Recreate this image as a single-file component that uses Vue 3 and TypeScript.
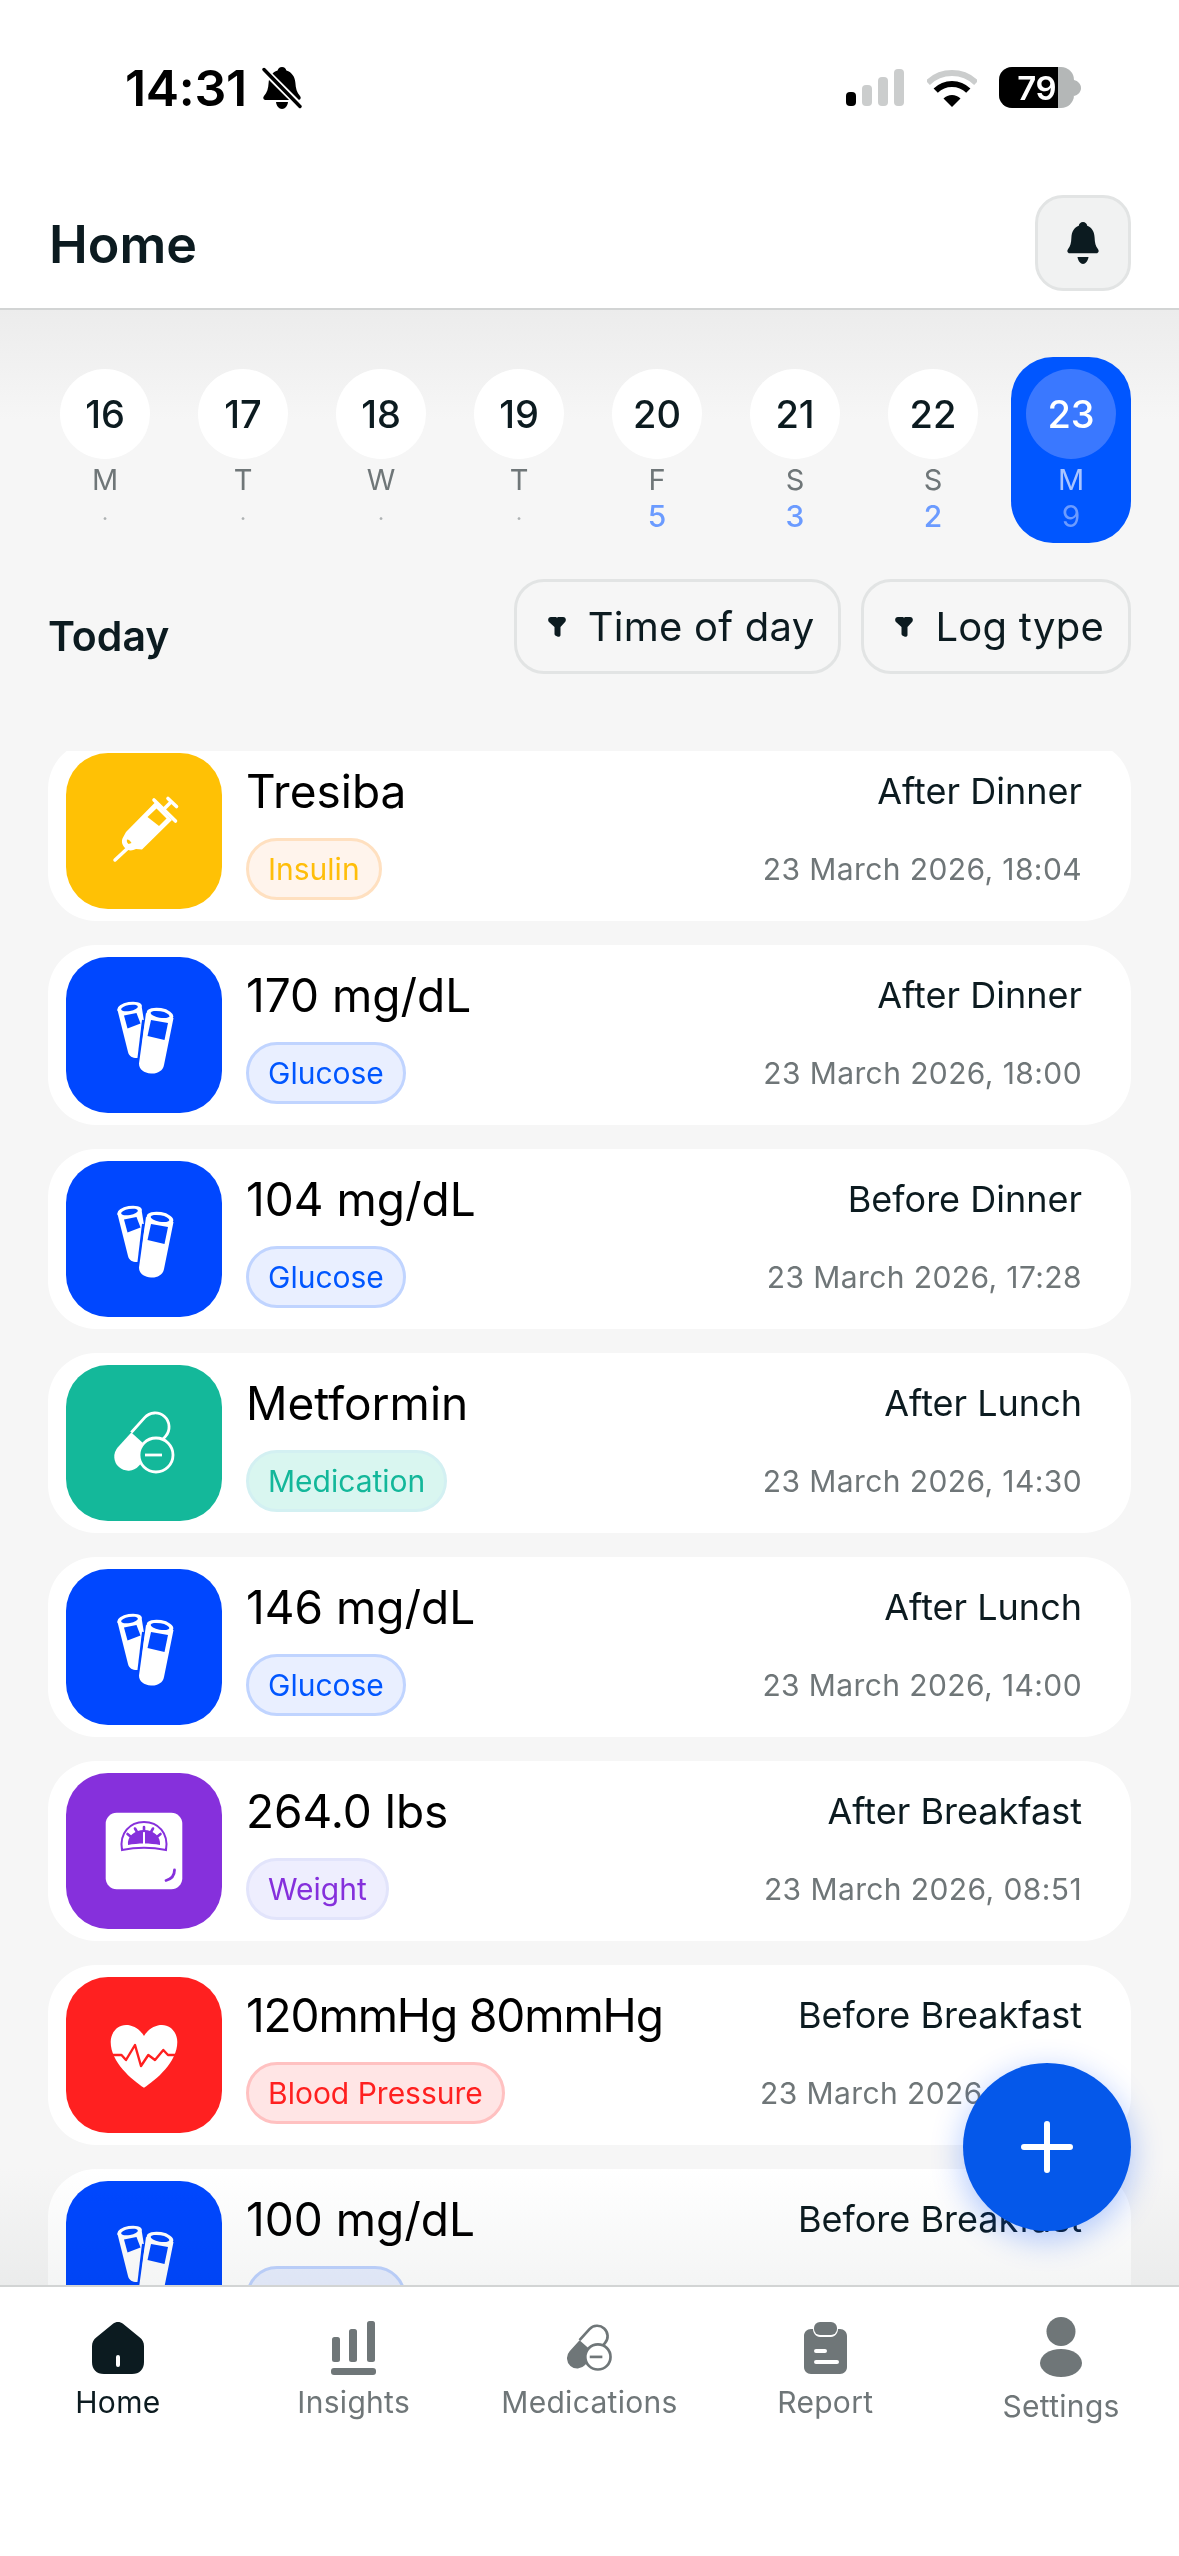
<script setup lang="ts">
type Kind = 'insulin' | 'glucose' | 'medication' | 'weight' | 'pressure'

interface Day { num: number; wd: string; count: string; active?: boolean }
interface Log { title: string; when: string; kind: Kind; tag: string; date: string }

const days: Day[] = [
  { num: 16, wd: 'M', count: '.' },
  { num: 17, wd: 'T', count: '.' },
  { num: 18, wd: 'W', count: '.' },
  { num: 19, wd: 'T', count: '.' },
  { num: 20, wd: 'F', count: '5' },
  { num: 21, wd: 'S', count: '3' },
  { num: 22, wd: 'S', count: '2' },
  { num: 23, wd: 'M', count: '9', active: true },
]

const logs: Log[] = [
  { title: 'Tresiba', when: 'After Dinner', kind: 'insulin', tag: 'Insulin', date: '23 March 2026, 18:04' },
  { title: '170 mg/dL', when: 'After Dinner', kind: 'glucose', tag: 'Glucose', date: '23 March 2026, 18:00' },
  { title: '104 mg/dL', when: 'Before Dinner', kind: 'glucose', tag: 'Glucose', date: '23 March 2026, 17:28' },
  { title: 'Metformin', when: 'After Lunch', kind: 'medication', tag: 'Medication', date: '23 March 2026, 14:30' },
  { title: '146 mg/dL', when: 'After Lunch', kind: 'glucose', tag: 'Glucose', date: '23 March 2026, 14:00' },
  { title: '264.0 lbs', when: 'After Breakfast', kind: 'weight', tag: 'Weight', date: '23 March 2026, 08:51' },
  { title: '120mmHg 80mmHg', when: 'Before Breakfast', kind: 'pressure', tag: 'Blood Pressure', date: '23 March 2026, 07:30' },
  { title: '100 mg/dL', when: 'Before Breakfast', kind: 'glucose', tag: 'Glucose', date: '23 March 2026, 07:00' },
]

const filters = ['Time of day', 'Log type']
</script>

<template>
  <div class="screen">
    <header class="top">
      <div class="status">
        <div class="status-left">
          <span class="clock">14:31</span>
          <svg class="muted" viewBox="0 0 40 42" width="40" height="42">
            <path fill="#000" d="M20 0c2.400 0 4 1.600 4.400 3.600C30 5.400 33 10 33.400 16c.3 5.400 1.400 9.400 4.600 13 1.400 1.600.6 4-1.800 4H3.800c-2.400 0-3.200-2.400-1.800-4 3.200-3.600 4.300-7.600 4.600-13C7 10 10 5.400 15.600 3.600 16 1.600 17.600 0 20 0z"/>
            <path fill="#000" d="M14 35h12c-.4 4-3 7-6 7s-5.600-3-6-7z"/>
            <path d="M2 3l37 37" stroke="#fff" stroke-width="7"/>
            <path d="M2 2.500l36 37" stroke="#000" stroke-width="3.400" stroke-linecap="round"/>
          </svg>
        </div>
        <div class="status-right">
          <svg viewBox="0 0 58 37" width="58" height="37">
            <rect x="0" y="23" width="10" height="14" rx="4" fill="#000"/>
            <rect x="16" y="16" width="10" height="21" rx="4" fill="#cbcdcd"/>
            <rect x="32" y="8" width="10" height="29" rx="4" fill="#cbcdcd"/>
            <rect x="48" y="0" width="10" height="37" rx="4" fill="#cbcdcd"/>
          </svg>
          <svg class="wifi" viewBox="0 0 50 38" width="50" height="38">
            <path d="M.8 13.800A35 35 0 0 1 49.200 13.800" fill="none" stroke="#cbcdcd" stroke-width="6"/>
            <path d="M8.700 21.700A23 23 0 0 1 41.300 21.700" fill="none" stroke="#000" stroke-width="6"/>
            <path d="M25 38L16.500 29.500A12 12 0 0 1 33.500 29.500Z" fill="#000"/>
          </svg>
          <div class="battery">
            <div class="battery-fill">79</div>
          </div>
          <svg class="nub" viewBox="0 0 7 16" width="7" height="16">
            <path d="M0 0c4 1 7 4 7 8s-3 7-7 8z" fill="#b4b7b7"/>
          </svg>
        </div>
      </div>
      <div class="title-row">
        <h1 class="title">Home</h1>
        <button class="bell-btn" type="button" aria-label="Notifications">
          <svg viewBox="0 0 32 42" width="32" height="42">
            <path fill="#0c1b20" d="M16 0c2.400 0 4 1.800 4.200 3.800C25 5.600 27.400 10 27.600 15.500c.2 5.300 1 8.800 3.300 11.500 1.500 1.800.6 4.200-1.800 4.200H2.900C.5 31.200-.4 28.800 1.100 27c2.300-2.700 3.100-6.200 3.300-11.500C4.600 10 7 5.600 11.800 3.800 12 1.800 13.600 0 16 0z"/>
            <path fill="#0c1b20" d="M10.500 35h11c-.6 4-3 7-5.500 7s-4.900-3-5.500-7z"/>
          </svg>
        </button>
      </div>
    </header>

    <main class="main">
      <section class="calendar">
        <div v-for="d in days" :key="d.num" class="day" :class="{ active: d.active }">
          <div class="circle">{{ d.num }}</div>
          <div class="wd">{{ d.wd }}</div>
          <div class="count" :class="{ none: d.count === '.' }">{{ d.count }}</div>
        </div>
      </section>

      <section class="filter-row">
        <h2 class="today">Today</h2>
        <div class="filters">
          <button v-for="f in filters" :key="f" class="filter" type="button">
            <svg viewBox="0 0 18 20" width="18" height="20">
              <path fill="#0c1b20" d="M3 0h4.500C8.500 0 9 .6 9 1.400 9 .6 9.500 0 10.500 0H15c2.500 0 3.600 2.600 2.300 4.800L12.500 10v8c0 1.300-1.400 2.200-2.600 1.700l-2.200-1a2 2 0 0 1-1.200-1.800V10L.7 4.800C-.6 2.600.5 0 3 0z"/>
            </svg>
            <span>{{ f }}</span>
          </button>
        </div>
      </section>

      <section class="list">
        <div class="list-inner">
          <article v-for="(l, i) in logs" :key="i" class="card">
            <div class="icon" :class="l.kind">
              <svg viewBox="0 0 156 156" width="156" height="156">
                <g v-if="l.kind === 'insulin'">
                  <path d="M49 107l14-13" stroke="#fff" stroke-width="3.500" stroke-linecap="round"/>
                  <path d="M89 49.500L106 67 76 96.500 70 96c-4 2-8 2-11-1s-4-7-2-10.500l3-5.500z" fill="#fff"/>
                  <path d="M90.500 55.500L100.500 65.500 93 73 81.500 64z" fill="#ffc105"/>
                  <path d="M88 47l21.500 21" stroke="#fff" stroke-width="3.600" stroke-linecap="round"/>
                  <path d="M97 57l8-8" stroke="#fff" stroke-width="3.600"/>
                  <path d="M102 45.500l8.500 8" stroke="#fff" stroke-width="3.600" stroke-linecap="round"/>
                  <path d="M62.500 91c-1.500-1-2-3-1.500-4.500 2 .2 3.500 1.500 4.500 3.500z" fill="#ffc105"/>
                </g>
                <g v-else-if="l.kind === 'glucose'">
                  <path d="M51.500 53l24-4.500 4 25L76 88l-4 13c-4 .5-9-1-10-6z" fill="#fff"/>
                  <ellipse cx="63.500" cy="50.500" rx="12.500" ry="5.500" transform="rotate(-10 63.500 50.500)" fill="#fff"/>
                  <ellipse cx="63.500" cy="51" rx="8.500" ry="3" transform="rotate(-10 63.500 51)" fill="#0047ff"/>
                  <path d="M58 58.500l12.500-2.500 4 10.500-13 5z" fill="#0047ff"/>
                  <path d="M77.500 63l-5 42" stroke="#0047ff" stroke-width="3"/>
                  <path d="M80 56l27.500 5-9.500 47c-1 6-7 9-13 8.500-7-.5-12-4-12-10z" fill="#fff"/>
                  <ellipse cx="94" cy="57.500" rx="13.500" ry="6.500" transform="rotate(10 94 57.500)" fill="#fff"/>
                  <ellipse cx="94" cy="57.500" rx="9.500" ry="3.200" transform="rotate(10 94 57.500)" fill="#0047ff"/>
                  <path d="M85 63l17 3-3.500 17-17-4z" fill="#0047ff"/>
                </g>
                <g v-else-if="l.kind === 'medication'">
                  <g transform="translate(62.300 91.700) rotate(-48)">
                    <path d="M20 -14H0A14 14 0 0 0 0 14H20Z" fill="#fff"/>
                    <path d="M20 -14H40A14 14 0 0 1 40 14H20" fill="none" stroke="#fff" stroke-width="2.800"/>
                  </g>
                  <circle cx="90" cy="90" r="17" fill="#14b89a" stroke="#fff" stroke-width="2.800"/>
                  <path d="M79 90h17" stroke="#fff" stroke-width="2.800"/>
                </g>
                <g v-else-if="l.kind === 'weight'">
                  <rect x="39.700" y="39.700" width="76.600" height="76.600" rx="11" fill="#fff"/>
                  <path d="M56 77C53 60 64 49 78 49s25 11 22 28c-14-3-30-3-44 0z" fill="none" stroke="#8630dc" stroke-width="2"/>
                  <path d="M62 72c-1-8 6-15 16-15s17 7 16 15c-10-2-22-2-32 0z" fill="#8630dc"/>
                  <path d="M78 58.500V71" stroke="#fff" stroke-width="2"/>
                  <path d="M78 54v4M69 55.500l2 3.500M87 55.500l-2 3.500M61.500 61l3 2.500M94.500 61l-3 2.500" stroke="#8630dc" stroke-width="2.600" stroke-linecap="round"/>
                  <path d="M108.500 97c0 5-3 9-8.500 10.500" fill="none" stroke="#8630dc" stroke-width="2.800" stroke-linecap="round"/>
                </g>
                <g v-else>
                  <path d="M78 59C73 51 66 48 60 48 51 48 44.700 56 44.700 65 44.700 85 66 103 78 110.700 90 103 111.300 85 111.300 65 111.300 56 105 48 96 48 90 48 83 51 78 59Z" fill="#fff"/>
                  <path d="M45.500 78H55.500L60 83 69 68 75 89 82.300 78 89 83 97.300 73 102 78H111.500" fill="none" stroke="#ff2020" stroke-width="2.400" stroke-linejoin="round"/>
                </g>
              </svg>
            </div>
            <div class="body">
              <div class="line">
                <span class="name" :class="l.kind">{{ l.title }}</span>
                <span class="when">{{ l.when }}</span>
              </div>
              <div class="line sub">
                <span class="chip" :class="l.kind">{{ l.tag }}</span>
                <span class="date">{{ l.date }}</span>
              </div>
            </div>
          </article>
        </div>
      </section>

      <div class="fade-bottom"></div>

      <button class="fab" type="button" aria-label="Add">
        <svg viewBox="0 0 52 52" width="52" height="52">
          <path d="M26 3v46M3 26h46" stroke="#fff" stroke-width="6" stroke-linecap="round"/>
        </svg>
      </button>
    </main>

    <nav class="nav">
      <div class="tab on">
        <svg viewBox="0 0 52 52" width="52" height="52">
          <path fill="currentColor" d="M21 1.800c3-2.400 7-2.400 10 0l16.500 13.400c3 2.400 4.500 5 4.500 9V40c0 7.500-4.500 12-12 12H12C4.500 52 0 47.500 0 40V24.200c0-4 1.500-6.600 4.500-9z"/>
          <rect x="24" y="33" width="4" height="12" rx="2" fill="#fff"/>
        </svg>
        <span>Home</span>
      </div>
      <div class="tab">
        <svg viewBox="0 0 45 54" width="45" height="54">
          <rect x="1" y="16" width="8" height="25" rx="2.500" fill="currentColor"/>
          <rect x="18" y="8" width="8" height="33" rx="2.500" fill="currentColor"/>
          <rect x="36" y="0" width="8" height="41" rx="2.500" fill="currentColor"/>
          <rect x="0" y="47" width="45" height="7" rx="3" fill="currentColor"/>
        </svg>
        <span>Insights</span>
      </div>
      <div class="tab">
        <svg viewBox="47 46 62 64" width="46" height="52">
          <g transform="translate(62.300 91.700) rotate(-48)">
            <path d="M20 -14H0A14 14 0 0 0 0 14H20Z" fill="currentColor"/>
            <path d="M20 -14H40A14 14 0 0 1 40 14H20" fill="none" stroke="currentColor" stroke-width="3.600"/>
          </g>
          <circle cx="90" cy="90" r="17" fill="#fff" stroke="currentColor" stroke-width="3.600"/>
          <path d="M79 90h17" stroke="currentColor" stroke-width="3.600"/>
        </svg>
        <span>Medications</span>
      </div>
      <div class="tab">
        <svg viewBox="0 0 43 52" width="43" height="52">
          <path fill="currentColor" d="M7 7h2c0 4 3 8 7 8h11c4 0 7-4 7-8h2c4 0 7 3 7 7v31c0 4-3 7-7 7H7c-4 0-7-3-7-7V14c0-4 3-7 7-7z"/>
          <rect x="10" y="0" width="23" height="13" rx="6" fill="currentColor"/>
          <path d="M12 29h9M12 40h21" stroke="#fff" stroke-width="4" stroke-linecap="round"/>
        </svg>
        <span>Report</span>
      </div>
      <div class="tab tall">
        <svg viewBox="0 0 42 60" width="42" height="60">
          <circle cx="21" cy="14.500" r="14.500" fill="currentColor"/>
          <ellipse cx="21" cy="46" rx="21" ry="14" fill="currentColor"/>
        </svg>
        <span>Settings</span>
      </div>
    </nav>
  </div>
</template>

<style>
html, body { margin: 0; background: #fff; }
</style>

<style scoped>
.screen {
  width: 1179px;
  height: 2556px;
  display: flex;
  flex-direction: column;
  overflow: hidden;
  background: #fff;
  font-family: Inter, "Liberation Sans", sans-serif;
  color: #0c1b20;
}
.top {
  flex: none;
  height: 310px;
  box-sizing: border-box;
  border-bottom: 2px solid #d2d4d4;
}
.status {
  height: 190px;
  box-sizing: border-box;
  padding: 64px 98px 0 125px;
  display: flex;
  justify-content: space-between;
  align-items: flex-start;
}
.status-left { display: flex; align-items: center; gap: 15px; }
.clock { font-size: 50px; line-height: 48px; font-weight: 600; color: #000; letter-spacing: -.3px; }
.status-right { display: flex; align-items: center; padding-top: 3px; }
.wifi { margin-left: 23px; }
.battery {
  margin-left: 22px;
  width: 75px;
  height: 41px;
  border-radius: 13px;
  background: #b4b7b7;
  overflow: hidden;
}
.battery-fill {
  width: 59px;
  height: 41px;
  background: #000;
  color: #fff;
  font-size: 33px;
  font-weight: 600;
  line-height: 42px;
  letter-spacing: -.5px;
  text-align: right;
  padding-right: 2px;
  box-sizing: border-box;
}
.title-row {
  height: 118px;
  box-sizing: border-box;
  padding: 5px 48px 0 49px;
  display: flex;
  justify-content: space-between;
  align-items: flex-start;
}
.title { margin: -3px 0 0; font-size: 52px; line-height: 106px; font-weight: 600; }
.bell-btn {
  width: 96px;
  height: 96px;
  padding: 0;
  box-sizing: border-box;
  border: 3px solid #e2e4e4;
  border-radius: 28px;
  background: #f1f2f2;
  display: flex;
  align-items: center;
  justify-content: center;
}
.main {
  position: relative;
  flex: 1;
  min-height: 0;
  display: flex;
  flex-direction: column;
  background: linear-gradient(to bottom, #ececec, #f6f6f6 110px);
}
.calendar {
  flex: none;
  padding: 47px 48px 0 45px;
  display: grid;
  grid-template-columns: repeat(8, 120px);
  gap: 18px;
}
.day {
  height: 186px;
  box-sizing: border-box;
  padding-top: 12px;
  border-radius: 42px;
  display: flex;
  flex-direction: column;
  align-items: center;
}
.circle {
  width: 90px;
  height: 90px;
  border-radius: 50%;
  background: #fff;
  display: flex;
  align-items: center;
  justify-content: center;
  font-size: 38px;
  font-weight: 500;
}
.wd {
  margin-top: 3px;
  height: 36px;
  line-height: 36px;
  font-size: 29px;
  color: #6f7678;
}
.count {
  height: 36px;
  line-height: 36px;
  font-size: 30px;
  font-weight: 500;
  color: #6b9bff;
}
.count.none { color: #aeb2b3; font-size: 20px; line-height: 30px; }
.day.active { background: #0056ff; }
.day.active .circle { background: #3a78ff; color: #fff; }
.day.active .wd { color: #a9c4ff; }
.day.active .count { color: #6b9bff; font-weight: 400; }
.filter-row {
  flex: none;
  margin-top: 36px;
  padding: 0 48px;
  display: flex;
  justify-content: space-between;
  align-items: flex-start;
}
.today { margin: 33px 0 0; font-size: 41px; line-height: 48px; font-weight: 600; }
.filters { display: flex; gap: 20px; }
.filter {
  height: 95px;
  box-sizing: border-box;
  padding: 0 24px 0 31px;
  border: 3px solid #e2e4e4;
  border-radius: 30px;
  background: transparent;
  display: flex;
  align-items: center;
  gap: 22px;
  font-family: inherit;
  font-size: 40px;
  letter-spacing: .25px;
  color: #0c1b20;
}
.list {
  flex: 1;
  min-height: 0;
  margin-top: 77px;
  padding: 0 48px;
  overflow: hidden;
}
.list-inner {
  margin-top: -10px;
  display: flex;
  flex-direction: column;
  gap: 24px;
}
.card {
  flex: none;
  height: 180px;
  box-sizing: border-box;
  padding: 12px 49px 12px 18px;
  border-radius: 48px;
  background: #fff;
  display: flex;
  gap: 24px;
}
.icon {
  flex: none;
  width: 156px;
  height: 156px;
  border-radius: 42px;
}
.icon svg { display: block; }
.icon.insulin { background: #ffc105; }
.icon.glucose { background: #0047ff; }
.icon.medication { background: #14b89a; }
.icon.weight { background: #8630dc; }
.icon.pressure { background: #ff2020; }
.body {
  flex: 1;
  min-width: 0;
  padding-top: 9px;
  display: flex;
  flex-direction: column;
}
.line {
  display: flex;
  justify-content: space-between;
  align-items: center;
  height: 58px;
}
.line.sub {
  margin-top: 18px;
  height: 62px;
}
.name { font-size: 46px; line-height: 58px; color: #000; white-space: nowrap; }
.name.pressure { letter-spacing: -1.1px; }
.when { font-size: 36px; line-height: 44px; color: #0c1b20; white-space: nowrap; }
.date { font-size: 30px; line-height: 40px; color: #6f7678; letter-spacing: .4px; white-space: nowrap; }
.chip {
  height: 62px;
  box-sizing: border-box;
  padding: 0 19px;
  border: 3px solid;
  border-radius: 31px;
  font-size: 30px;
  line-height: 56px;
  white-space: nowrap;
}
.chip.insulin { background: #fff4ec; border-color: #ffe0c0; color: #ffbe0a; }
.chip.glucose { background: #e9efff; border-color: #c0d4ff; color: #0056ff; }
.chip.medication { background: #d9f6f0; border-color: #d3f0f2; color: #13b79a; }
.chip.weight { background: #eeeefe; border-color: #e2e4fb; color: #8530dc; }
.chip.pressure { background: #ffe5e5; border-color: #ffc1c1; color: #ff2020; }
.fade-bottom {
  position: absolute;
  left: 0;
  right: 0;
  bottom: 0;
  height: 116px;
  background: linear-gradient(to bottom, #fff, #f4f5f5);
  mix-blend-mode: multiply;
  pointer-events: none;
}
.fab {
  position: absolute;
  right: 48px;
  top: 1753px;
  width: 168px;
  height: 168px;
  padding: 0;
  border: 0;
  border-radius: 50%;
  background: #0558ea;
  box-shadow: 0 8px 32px rgba(0, 80, 255, .32);
  display: flex;
  align-items: center;
  justify-content: center;
}
.nav {
  flex: none;
  height: 271px;
  box-sizing: border-box;
  border-top: 2px solid #d2d4d4;
  background: #fff;
  display: grid;
  grid-template-columns: repeat(5, 1fr);
}
.tab {
  height: 100%;
  box-sizing: border-box;
  padding-top: 34px;
  display: flex;
  flex-direction: column;
  align-items: center;
  color: #6f7678;
  font-size: 30px;
  line-height: 36px;
}
.tab svg { display: block; height: 54px; }
.tab span { margin-top: 9px; letter-spacing: .3px; }
.tab.on { color: #0c1b20; }
.tab.tall { padding-top: 30px; }
.tab.tall svg { height: 60px; }
.tab.tall span { margin-top: 11px; }
</style>
